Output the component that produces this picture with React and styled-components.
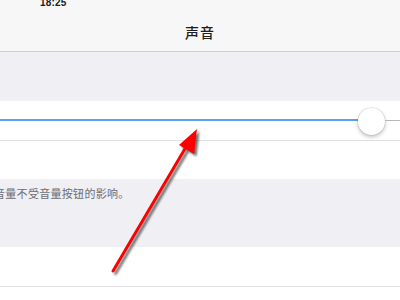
import React from 'react';
import styled, { createGlobalStyle } from 'styled-components';

const GlobalStyle = createGlobalStyle`
  html, body {
    margin: 0;
    padding: 0;
    background: #ffffff;
    overflow: hidden;
  }
  body {
    font-family: 'Noto Sans CJK SC', 'Noto Sans', sans-serif;
  }
`;

const Page = styled.div`
  position: relative;
  width: 400px;
  height: 300px;
  overflow: hidden;
  display: flex;
  flex-direction: column;
  background: #ffffff;
`;

const NavBar = styled.div`
  height: 51px;
  flex-shrink: 0;
  background: #f7f7f7;
  border-bottom: 1px solid #cfcfd1;
  display: flex;
  flex-direction: column;
`;

const StatusBar = styled.div`
  height: 9px;
  padding-left: 40px;
  display: flex;
  align-items: flex-end;
`;

const Time = styled.span`
  font-family: 'Liberation Sans', Arial, sans-serif;
  font-weight: bold;
  font-size: 10px;
  line-height: 10px;
  color: #222;
  letter-spacing: 0.2px;
  margin-bottom: 1px;
`;

const Title = styled.div`
  flex: 1;
  display: flex;
  align-items: center;
  justify-content: center;
  padding-top: 3px;
  font-size: 14px;
  font-weight: 500;
  color: #1e1e1e;
  letter-spacing: 1px;
`;

const Gap = styled.div`
  height: ${(p) => p.$h}px;
  flex-shrink: 0;
  background: #efeff4;
`;

const Section = styled.div`
  background: #ffffff;
  display: flex;
  flex-direction: column;
  flex-shrink: 0;
`;

const Row = styled.div`
  height: ${(p) => p.$h}px;
  border-bottom: ${(p) => (p.$line ? '1px solid #e1e1e4' : 'none')};
  display: flex;
  align-items: center;
`;

const Track = styled.div`
  flex: 1;
  display: flex;
  align-items: center;
  margin-top: -1px;
`;

const Fill = styled.div`
  width: 358px;
  height: 2px;
  background: #5aa1f3;
`;

const Rest = styled.div`
  flex: 1;
  height: 1px;
  background: #b6b6b6;
`;

const Thumb = styled.div`
  width: 27px;
  height: 27px;
  border-radius: 50%;
  background: #ffffff;
  box-shadow: 0 2px 4px rgba(0, 0, 0, 0.25), 0 0 0 0.5px rgba(0, 0, 0, 0.12);
  flex-shrink: 0;
  margin-top: 2px;
`;

const Footer = styled.div`
  height: 68px;
  flex-shrink: 0;
  background: #efeff4;
  padding-top: 6px;
  box-sizing: border-box;
`;

const Note = styled.div`
  margin-left: -6px;
  font-size: 11px;
  line-height: 17px;
  color: #6d6d72;
  letter-spacing: 0.3px;
  white-space: nowrap;
`;

const Filler = styled.div`
  flex: 1;
  background: #ffffff;
`;

const Overlay = styled.svg`
  position: absolute;
  left: 0;
  top: 0;
  pointer-events: none;
`;

function Arrow() {
  return (
    <Overlay width="400" height="300" viewBox="0 0 400 300">
      <defs>
        <filter id="sh" x="-20%" y="-20%" width="140%" height="140%">
          <feGaussianBlur stdDeviation="1.2" />
        </filter>
      </defs>
      <g transform="translate(2.5 2.5)" filter="url(#sh)" opacity="0.55">
        <line x1="113" y1="271" x2="186" y2="147" stroke="#000" strokeWidth="3" strokeLinecap="round" />
        <polygon points="197,129 194,154 179,145" fill="#000" />
      </g>
      <line x1="113" y1="271" x2="186" y2="147" stroke="#ff0000" strokeWidth="3" strokeLinecap="round" />
      <polygon points="197,129 194,154 179,145" fill="#ff0000" />
    </Overlay>
  );
}

export default function App() {
  return (
    <>
      <GlobalStyle />
      <Page>
        <NavBar>
          <StatusBar>
            <Time>18:25</Time>
          </StatusBar>
          <Title>声音</Title>
        </NavBar>
        <Gap $h={49} />
        <Section>
          <Row $h={39} $line>
            <Track>
              <Fill />
              <Thumb />
              <Rest />
            </Track>
          </Row>
          <Row $h={38} />
        </Section>
        <Footer>
          <Note>音量不受音量按钮的影响。</Note>
        </Footer>
        <Section>
          <Row $h={39} $line />
        </Section>
        <Filler />
        <Arrow />
      </Page>
    </>
  );
}
